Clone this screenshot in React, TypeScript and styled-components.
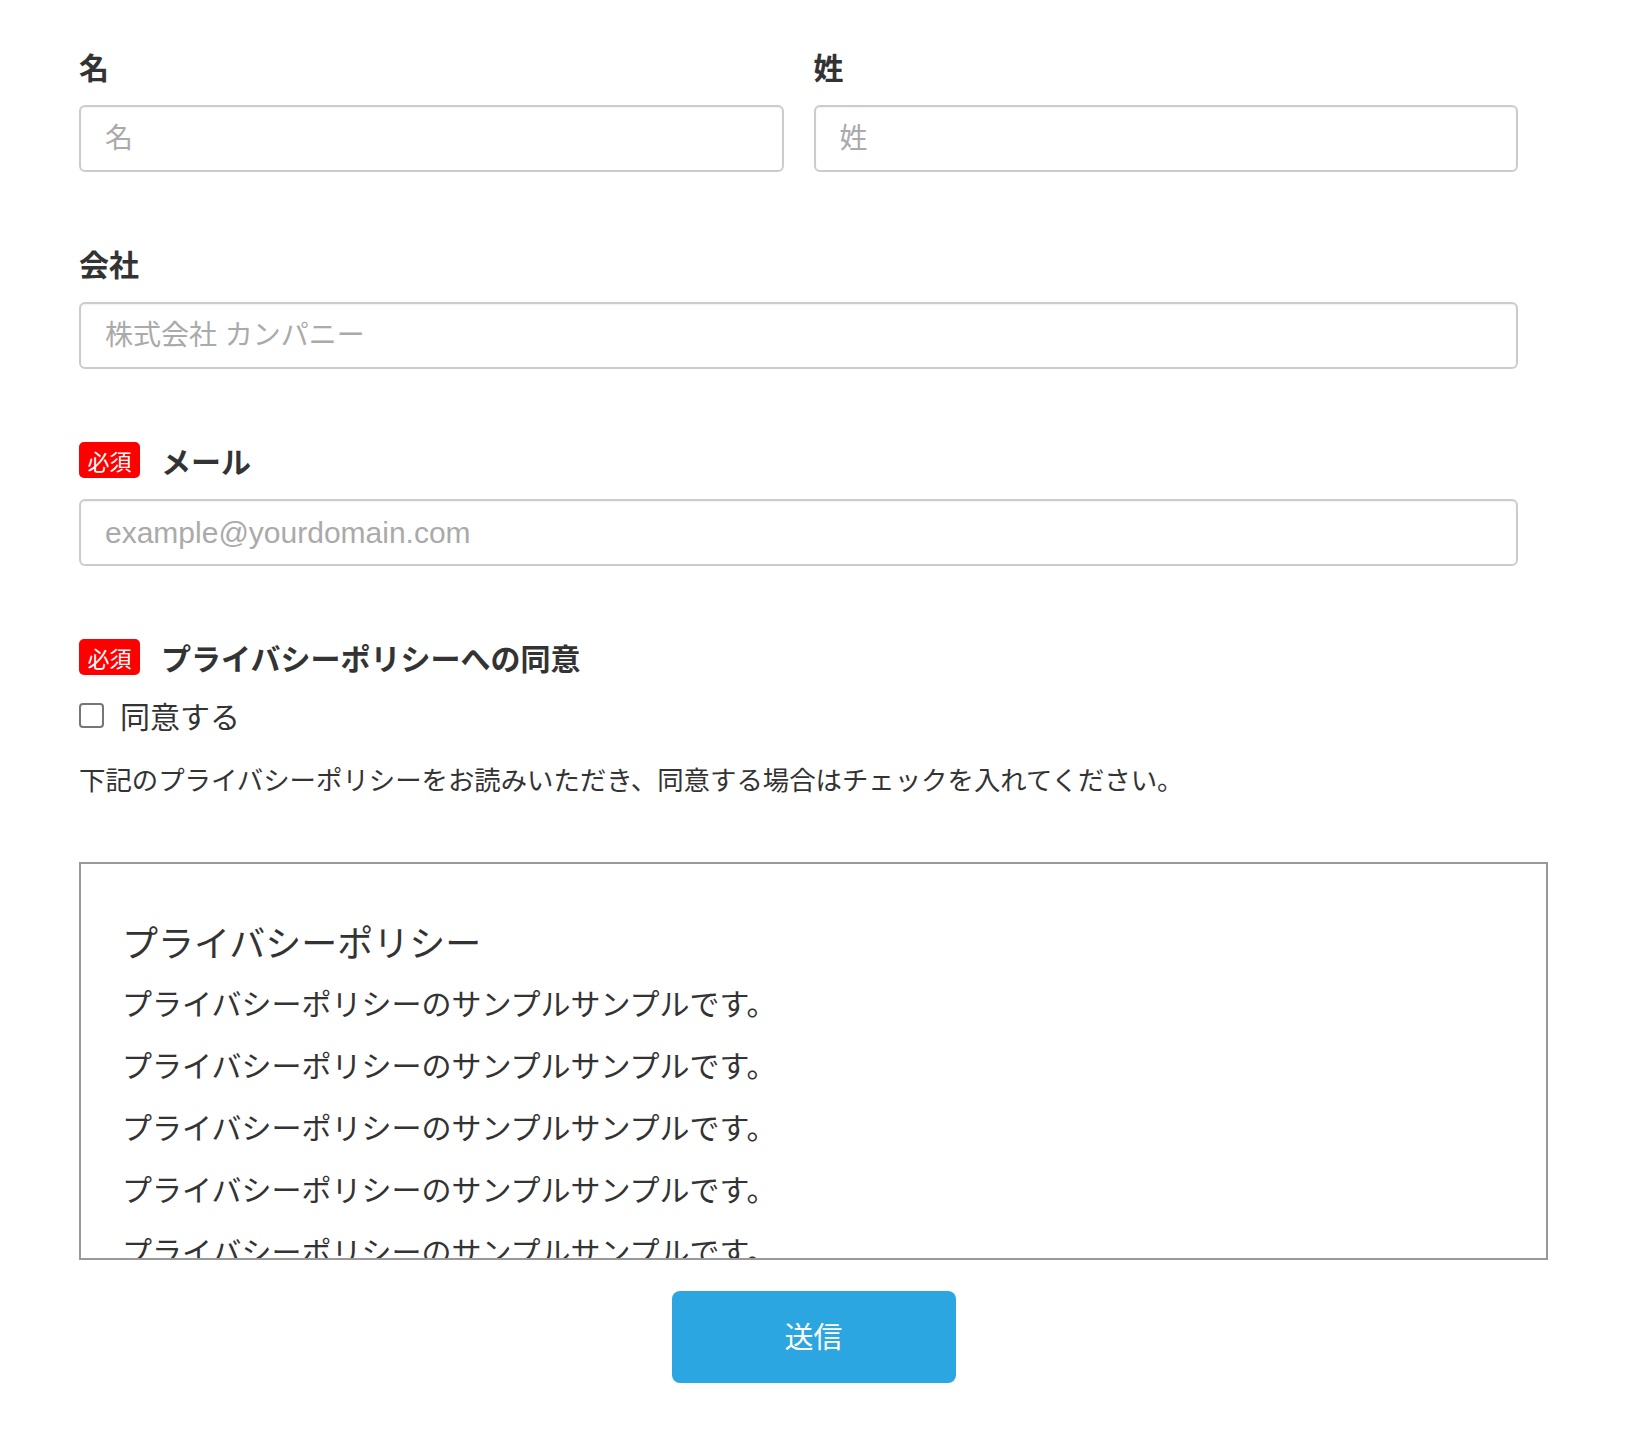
import * as React from 'react';
import styled, { createGlobalStyle } from 'styled-components';

const GlobalStyle = createGlobalStyle`
  html, body {
    margin: 0;
    padding: 0;
    background: #fff;
  }
  body {
    font-family: "Noto Sans CJK JP", "Noto Sans", sans-serif;
    color: #333;
  }
  * {
    box-sizing: border-box;
  }
`;

const policyLines = Array.from({ length: 8 }, () => 'プライバシーポリシーのサンプルサンプルです。');

export default function App() {
  return (
    <>
      <GlobalStyle />
      <Form onSubmit={e => e.preventDefault()}>
        <Columns>
          <Field>
            <Label>名</Label>
            <Input type="text" placeholder="名" />
          </Field>
          <Field>
            <Label>姓</Label>
            <Input type="text" placeholder="姓" />
          </Field>
        </Columns>

        <Field>
          <Label>会社</Label>
          <Input type="text" placeholder="株式会社 カンパニー" />
        </Field>

        <Field>
          <Label>
            <Required>必須</Required>
            メール
          </Label>
          <EmailInput type="email" placeholder="example@yourdomain.com" />
        </Field>

        <Consent>
          <Label>
            <Required>必須</Required>
            プライバシーポリシーへの同意
          </Label>
          <CheckRow>
            <Checkbox type="checkbox" />
            同意する
          </CheckRow>
          <Note>
            下記のプライバシーポリシーをお読みいただき、同意する場合はチェックを入れてください。
          </Note>
        </Consent>

        <PolicyBox>
          <PolicyTitle>プライバシーポリシー</PolicyTitle>
          {policyLines.map((line, i) => (
            <PolicyLine key={i}>{line}</PolicyLine>
          ))}
        </PolicyBox>

        <Actions>
          <SubmitButton type="submit">送信</SubmitButton>
        </Actions>
      </Form>
    </>
  );
}

const Form = styled.form`
  width: 1469px;
  margin-left: 79px;
  padding-top: 46px;
  padding-bottom: 40px;
`;

const Columns = styled.div`
  display: grid;
  grid-template-columns: 1fr 1fr;
`;

const Field = styled.div`
  margin-bottom: 71px;
`;

const Label = styled.label`
  display: flex;
  align-items: center;
  gap: 21px;
  height: 40px;
  line-height: 40px;
  margin-bottom: 19px;
  font-size: 30px;
  font-weight: 700;
  color: #333;
`;

const Required = styled.span`
  display: inline-flex;
  align-items: center;
  justify-content: center;
  width: 61px;
  height: 36px;
  border-radius: 5px;
  background: #ff0000;
  color: #fff;
  font-size: 22px;
  font-weight: 400;
  line-height: 1;
`;

const Input = styled.input`
  display: block;
  width: calc(100% - 30px);
  height: 67px;
  padding: 0 24px;
  border: 2px solid #cccccc;
  border-radius: 6px;
  box-shadow: inset 0 1px 2px rgba(0, 0, 0, 0.06);
  background: #fff;
  font-family: "Liberation Sans", "Noto Sans CJK JP", sans-serif;
  font-size: 28px;
  color: #333;
  outline: none;

  &::placeholder {
    color: #aaaaaa;
  }
`;

const EmailInput = styled(Input)`
  font-size: 30px;
`;

const Consent = styled.div`
  display: flex;
  flex-direction: column;
`;

const CheckRow = styled.label`
  display: flex;
  align-items: center;
  gap: 16px;
  height: 40px;
  margin-top: -1px;
  font-size: 30px;
  color: #333;
`;

const Checkbox = styled.input`
  appearance: none;
  margin: 0;
  width: 25px;
  height: 25px;
  border: 2px solid #767676;
  border-radius: 4px;
  background: #fff;
`;

const Note = styled.p`
  margin: 24px 0 0;
  line-height: 40px;
  font-size: 26.4px;
  color: #333;
`;

const PolicyBox = styled.div`
  margin-top: 63px;
  height: 398px;
  padding: 47px 41px 0;
  border: 2px solid #999999;
  overflow: hidden;
`;

const PolicyTitle = styled.h2`
  margin: 0;
  line-height: 60px;
  font-size: 36px;
  font-weight: 400;
  color: #333;
`;

const PolicyLine = styled.p`
  margin: 0;
  line-height: 62px;
  font-size: 30px;
  color: #333;
`;

const Actions = styled.div`
  display: flex;
  justify-content: center;
  margin-top: 31px;
`;

const SubmitButton = styled.button`
  width: 284px;
  height: 92px;
  padding: 0 0 4px;
  border: none;
  border-radius: 8px;
  background: #2ca6e0;
  color: #fff;
  font-family: "Noto Sans CJK JP", sans-serif;
  font-size: 29px;
  cursor: pointer;
`;
